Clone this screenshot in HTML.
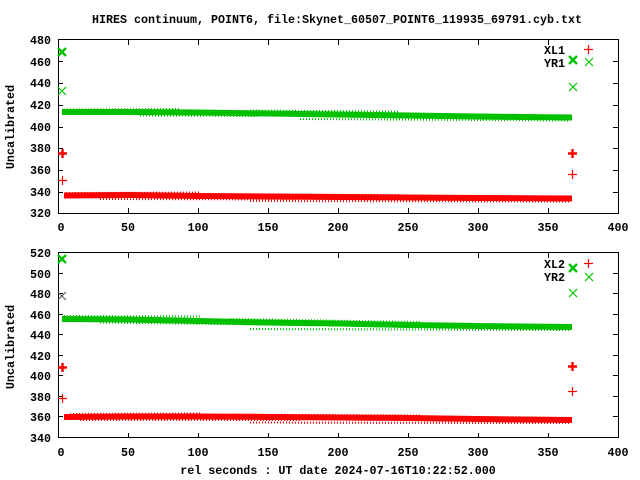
<!DOCTYPE html>
<html><head><style>html,body{margin:0;padding:0;background:#fff}svg{display:block}
text{font-family:"Liberation Mono","DejaVu Sans Mono",monospace;font-weight:bold;font-size:11.7px;fill:#000}</style></head>
<body>
<svg width="640" height="480" viewBox="0 0 640 480" xmlns="http://www.w3.org/2000/svg">
<text x="337" y="23" text-anchor="middle" textLength="490" lengthAdjust="spacingAndGlyphs">HIRES continuum, POINT6, file:Skynet_60507_POINT6_119935_69791.cyb.txt</text>

<!-- top plot -->
<g stroke="#000" stroke-width="1" fill="none">
<rect x="58.5" y="39.5" width="560" height="174"/>
<path d="M58 61.5h5M58 83.5h5M58 105.5h5M58 127.5h5M58 148.5h5M58 170.5h5M58 192.5h5
M618 61.5h-5M618 83.5h-5M618 105.5h-5M618 127.5h-5M618 148.5h-5M618 170.5h-5M618 192.5h-5
M128.5 213v-5M198.5 213v-5M268.5 213v-5M338.5 213v-5M408.5 213v-5M478.5 213v-5M548.5 213v-5
M128.5 40v5M198.5 40v5M268.5 40v5M338.5 40v5M408.5 40v5M478.5 40v5M548.5 40v5"/>
</g>
<g text-anchor="end">
<text x="51" y="44">480</text><text x="51" y="66">460</text><text x="51" y="87">440</text><text x="51" y="109">420</text><text x="51" y="131">400</text><text x="51" y="152">380</text><text x="51" y="174">360</text><text x="51" y="196">340</text><text x="51" y="217">320</text>
</g>
<g text-anchor="middle">
<text x="61" y="231">0</text><text x="128" y="231">50</text><text x="198" y="231">100</text><text x="268" y="231">150</text><text x="338" y="231">200</text><text x="408" y="231">250</text><text x="478" y="231">300</text><text x="548" y="231">350</text><text x="618" y="231">400</text>
</g>
<text transform="translate(14,127) rotate(-90)" text-anchor="middle">Uncalibrated</text>
<path d="M62 112 L128 112 L198 112.5 L268 113.5 L338 114.5 L408 115.5 L478 116.5 L572 117.5" stroke="#00c000" stroke-width="6" fill="none"/>
<path d="M64 109.5 L180 109 M140 115.5 L260 116 M250 110.5 L400 111.5 M300 119 L570 120.5" stroke="#00c000" stroke-width="2" stroke-dasharray="1 2" fill="none"/>
<path d="M64 195.5 L128 195 L198 196 L268 196.5 L338 197 L408 197.5 L478 198 L572 198.5" stroke="#f00" stroke-width="6" fill="none"/>
<path d="M66 193 L200 192.5 M100 199 L300 199.5 M230 194.5 L400 195 M250 201 L570 201.5" stroke="#f00" stroke-width="2" stroke-dasharray="1 2" fill="none"/>
<g stroke="#00c000" stroke-width="1.2" fill="none">
<path d="M58 48l8 8M66 48l-8 8M59 49l6 6M65 49l-6 6" stroke-width="2.4"/>
<path d="M58 87l8 8M66 87l-8 8"/>
<path d="M569 56l8 8M577 56l-8 8" stroke-width="2.4"/>
<path d="M569 83l8 8M577 83l-8 8"/>
<path d="M585 58l8 8M593 58l-8 8"/>
</g>
<g stroke="#f00" stroke-width="1.2" fill="none">
<path d="M58 153.5h9M62.5 149v9" stroke-width="2.4"/>
<path d="M58 180.5h9M62.5 176v9"/>
<path d="M568 153.5h9M572.5 149v9" stroke-width="2.4"/>
<path d="M568 174.5h9M572.5 170v9"/>
<path d="M584 49.5h9M588.5 45v9"/>
</g>
<g text-anchor="end"><text x="565" y="54">XL1</text><text x="565" y="67">YR1</text></g>

<!-- bottom plot -->
<g stroke="#000" stroke-width="1" fill="none">
<rect x="58.5" y="252.5" width="560" height="185"/>
<path d="M58 273.5h5M58 293.5h5M58 314.5h5M58 334.5h5M58 355.5h5M58 375.5h5M58 396.5h5M58 416.5h5
M618 273.5h-5M618 293.5h-5M618 314.5h-5M618 334.5h-5M618 355.5h-5M618 375.5h-5M618 396.5h-5M618 416.5h-5
M128.5 438v-5M198.5 438v-5M268.5 438v-5M338.5 438v-5M408.5 438v-5M478.5 438v-5M548.5 438v-5
M128.5 253v5M198.5 253v5M268.5 253v5M338.5 253v5M408.5 253v5M478.5 253v5M548.5 253v5"/>
</g>
<g text-anchor="end">
<text x="51" y="257">520</text><text x="51" y="278">500</text><text x="51" y="298">480</text><text x="51" y="319">460</text><text x="51" y="339">440</text><text x="51" y="360">420</text><text x="51" y="380">400</text><text x="51" y="401">380</text><text x="51" y="421">360</text><text x="51" y="442">340</text>
</g>
<g text-anchor="middle">
<text x="61" y="456">0</text><text x="128" y="456">50</text><text x="198" y="456">100</text><text x="268" y="456">150</text><text x="338" y="456">200</text><text x="408" y="456">250</text><text x="478" y="456">300</text><text x="548" y="456">350</text><text x="618" y="456">400</text>
</g>
<text transform="translate(14,347) rotate(-90)" text-anchor="middle">Uncalibrated</text>
<text x="338" y="474" text-anchor="middle">rel seconds : UT date 2024-07-16T10:22:52.000</text>
<path d="M62 319 L128 319.5 L198 321 L268 322.5 L338 323.5 L408 325 L478 326 L572 327" stroke="#00c000" stroke-width="6" fill="none"/>
<path d="M64 316 L200 316.5 M100 322.5 L300 325 M230 319 L420 322 M250 329 L570 330" stroke="#00c000" stroke-width="2" stroke-dasharray="1 2" fill="none"/>
<path d="M64 417 L128 416.5 L198 416.5 L268 417 L338 417.5 L408 418 L478 419 L572 420" stroke="#f00" stroke-width="6" fill="none"/>
<path d="M70 414 L200 413.5 M80 420 L300 420 M230 414.5 L420 415.5 M250 422.5 L570 423" stroke="#f00" stroke-width="2" stroke-dasharray="1 2" fill="none"/>
<g stroke="#00c000" stroke-width="1.2" fill="none">
<path d="M58 255l8 8M66 255l-8 8" stroke-width="2.4"/>
<path d="M569 264l8 8M577 264l-8 8" stroke-width="2.4"/>
<path d="M569 289l8 8M577 289l-8 8"/>
<path d="M585 273l8 8M593 273l-8 8"/>
</g>
<path d="M58 292l8 8M66 292l-8 8" stroke="#555" stroke-width="1" fill="none"/>
<g stroke="#f00" stroke-width="1.2" fill="none">
<path d="M58 367.5h9M62.5 363v9" stroke-width="2.4"/>
<path d="M58 398.5h9M62.5 394v9"/>
<path d="M568 366.5h9M572.5 362v9" stroke-width="2.4"/>
<path d="M568 391.5h9M572.5 387v9"/>
<path d="M584 263.5h9M588.5 259v9"/>
</g>
<g text-anchor="end"><text x="565" y="268">XL2</text><text x="565" y="281">YR2</text></g>
</svg>
</body></html>
